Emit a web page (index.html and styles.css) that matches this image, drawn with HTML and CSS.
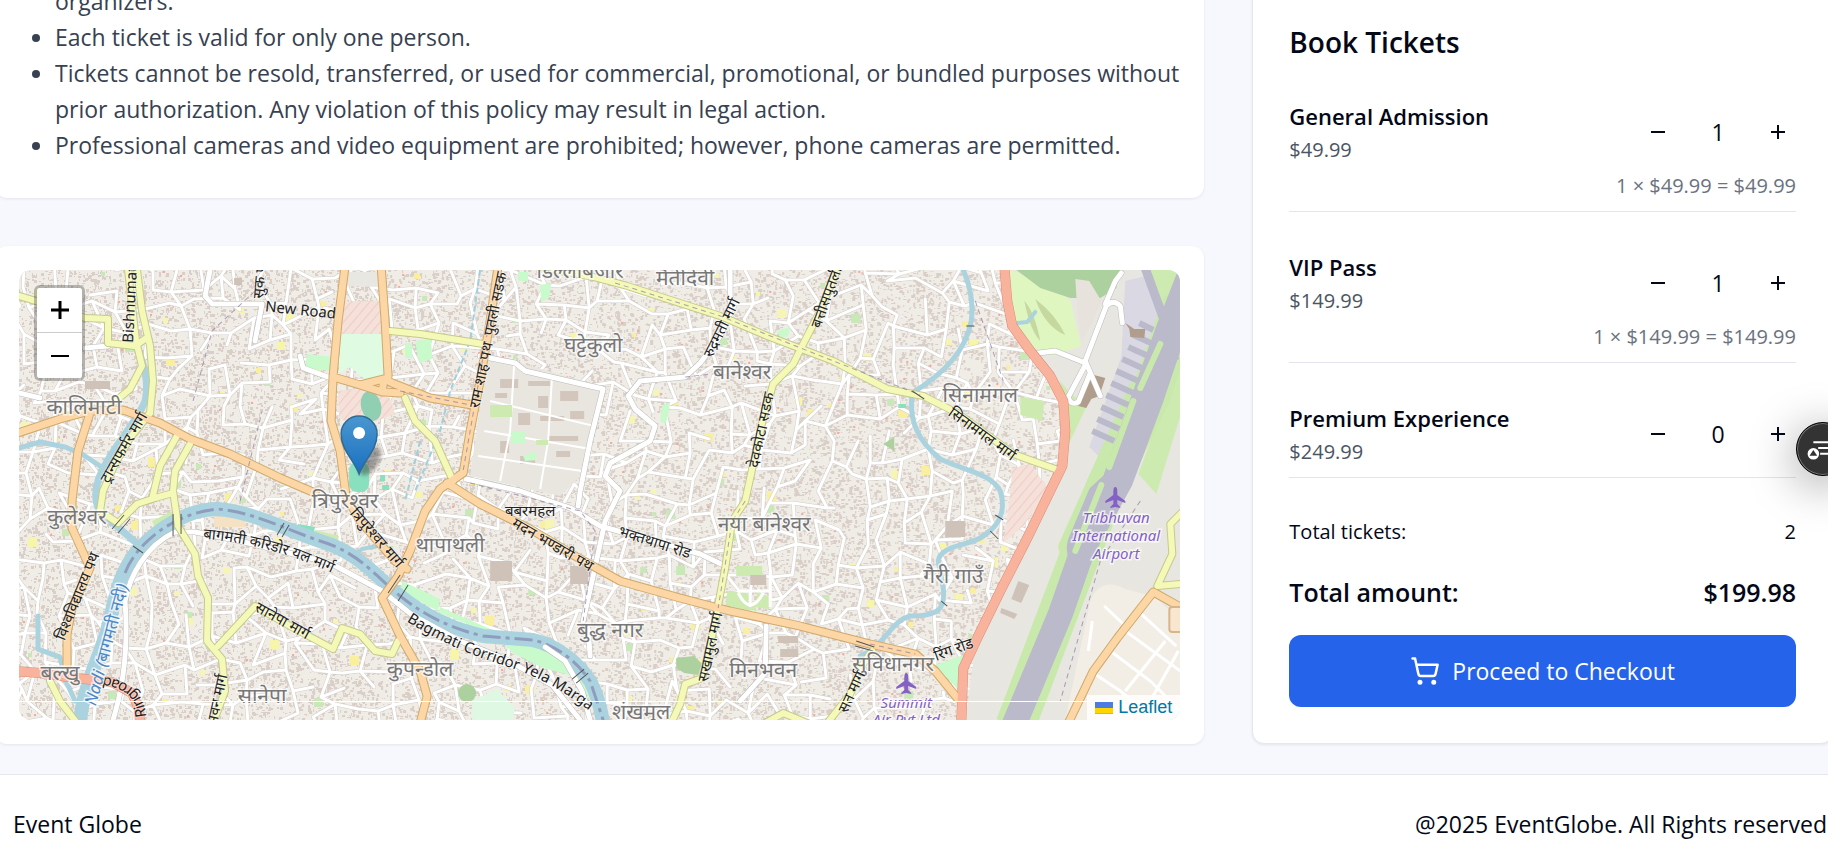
FILE: index.html
```html
<!DOCTYPE html>
<html lang="en">
<head>
<meta charset="utf-8">
<meta name="viewport" content="width=device-width, initial-scale=1">
<title>Event Globe</title>
<link rel="stylesheet" href="styles.css">
</head>
<body>
<main class="layout">
  <div class="main-col">
    <section class="card terms">
      <ul class="terms-list">
        <li>Please follow the instructions of the event staff and the<br>organizers.</li>
        <li>Each ticket is valid for only one person.</li>
        <li>Tickets cannot be resold, transferred, or used for commercial, promotional, or bundled purposes without prior authorization. Any violation of this policy may result in legal action.</li>
        <li>Professional cameras and video equipment are prohibited; however, phone cameras are permitted.</li>
      </ul>
    </section>

    <section class="card" aria-label="Event location">
      <div class="map">
        <svg class="map-canvas" viewBox="19 269 1161 450" preserveAspectRatio="xMidYMid slice" role="img" aria-label="Map of Kathmandu">
          <defs>
            <pattern id="hatch" width="7" height="7" patternUnits="userSpaceOnUse" patternTransform="rotate(40)"><rect width="7" height="7" fill="#f3e1da"/><path d="M0 0V7" stroke="#f5c9c2" stroke-width="2"/></pattern>
            <linearGradient id="pin" x1="0" y1="0" x2="0" y2="1"><stop offset="0" stop-color="#4a97cf"/><stop offset="1" stop-color="#1a6fc0"/></linearGradient>
            <filter id="soft"><feGaussianBlur stdDeviation="2"/></filter>
            <path id="p-corridor" d="M205 538C245 541 285 551 330 571"/>
            <path id="p-bagmati" d="M400 616C440 642 472 654 502 664C532 673 562 687 602 720"/>
            <path id="p-ring" d="M146 719C146 700 138 680 100 675"/>
          </defs>
          <rect x="19" y="269" width="1161" height="450" fill="#f0ece6"/>
          <path id="buildings" class="buildings"/>
          <g id="patches"></g>
          <path id="lane-edge" class="lane-edge"/>
          <path id="lane" class="lane"/>

          <g class="areas">
            <path fill="#e9e6e0" d="M487 355L520 362L600 385L585 470L560 495L470 475Z"/>
            <path fill="#d3c6bc" d="M500 378h18v9h-18zM528 380h22v5h-22zM560 390h18v10h-18zM518 412h12v12h-12zM540 415h24v5h-24zM500 440h9v12h-9zM548 435h30v5h-30zM520 455h15v8h-15zM570 410h14v8h-14zM495 392h12v5h-12zM538 395h10v12h-10zM556 450h14v6h-14z"/>
            <path fill="none" stroke="#fff" stroke-width="2" d="M514 364L510 430L500 480M552 374L548 440L540 488M490 400L594 425M484 430L590 448M478 455L582 470"/>
            <path fill="#cdebb0" d="M490 404h22v12h-22zM536 439h12v5h-12z"/>
            <path fill="#c8facc" d="M511 431h14v12h-14zM523 455l12-5 2 9-12 1zM540 284l11-2-2 15-8 4zM415 340l16-2 1 20-13 4zM405 342h7v15h-7zM518 271h10v9h-10zM777 330l13-4-2 9-8 2zM662 404l8-2-4 20-6-1z"/>
            <path fill="#e9e7e2" d="M347 271h34v15l-34-1z"/>
            <path fill="url(#hatch)" d="M343 300h40v33h-42zM338 390l22-3 30 10 5 16-36 14-20-10z"/>
            <path fill="#dffce2" d="M340 333h43v50l-16-3-17-14-11 6z"/>
            <path fill="#c8facc" d="M307 353l25 3-1 14-26-3z"/>
            <ellipse fill="#90cfb2" cx="371" cy="405" rx="10" ry="15" transform="rotate(-14 371 405)"/>
            <rect fill="#88e0be" x="349" y="461" width="20" height="30" rx="8"/>
            <path fill="#c8facc" d="M402 580l38 18-2 12-38-20zM440 606l50 22-4 3-48-20zM497 637l34 2 30 10 20 16-8 10-30-8-30-15zM577 675l10-5 12 30-5 8z"/>
            <path fill="#88e0be" d="M298 523l17 3-2 8-17-3z"/>
            <path fill="#cdebb0" d="M315 529l24 6-3 7-24-7zM152 520l26-13-3 10-20 10zM215 504q15-3 25 3v5l-25-4z"/>
            <path fill="#f5e2c4" d="M214 515l30 2 2 9-32 0z"/>
            <ellipse fill="#add19e" cx="467" cy="692" rx="9" ry="9"/>
            <path fill="#dff8e4" d="M472 700l25-12 18 20-3 11h-40z"/>
            <path fill="#add19e" d="M676 657l18-2 8 8-4 11-14-2-8-5z"/>
            <path fill="#cdebb0" d="M736 565h26v10h-26zM727 590l20 2 10 18-32-3zM757 590l12 6v12l-14-2z"/>
            <path fill="#cfc2b8" d="M750 574h16v10h-16zM778 635h20v7h-20zM780 648h18v8h-18z"/>
            <path fill="none" stroke="#fff" stroke-width="3" d="M737 590h32M750 590v16M738 592q12 24 25 0M770 570v36"/>
            <path fill="#cfc3b9" d="M85 380h25v8h-25zM490 560h22v20h-22zM570 565h18v18h-18zM945 520h20v16h-20zM234 277h8v7h-8z"/>
            <path fill="#c8facc" d="M935 664l28-10-6 34z"/>
            <path fill="#add19e" d="M883 443l11-7v14z"/>
            <path fill="#88e0be" d="M898 403h8v4h-8zM380 474h5v6h-5zM382 484h7v5h-7z"/>
            <path fill="url(#hatch)" d="M1012 467l18-4 19 26-26 36-20 17 6-40z"/>
            <path fill="#e8e6e0" d="M1010 269L1180 269V719H965L975 645L1062 470L1066 405L1035 350L1014 318Z"/>
            <path fill="#f2eee6" d="M1090 600q10-25 35-12l30 8 25 24v99h-115z"/>
            <path fill="none" stroke="#fff" stroke-width="3" d="M1093 672L1120 690L1150 715M1110 650L1150 680L1180 710M1125 630L1180 670M1140 612L1176 645M1104 605L1125 625M1100 700L1120 719M1125 690L1165 640M1150 700L1178 650M1092 620L1088 650M1075 700L1090 685"/>
            <path fill="#dff6c0" d="M1010 269l33 12 27 18 11 46-30 10-18-8-21-30z"/>
            <path fill="#add19e" d="M1016 269h104l-4 18-16 10-30 0-30-10z"/>
            <path fill="#e8e2dc" d="M1075 278l14 2 12 20-8 20-12 20-4-30z"/>
            <path fill="#c4d8a0" d="M1024 300q10 10 16 40q-10-10-16-40zM1035 298q20 15 30 36q-20-8-30-36z"/>
            <path fill="#cdebb0" d="M1020 396l24 4-2 20-22-6zM1060 380l8 10 18 16-18 38zM1150 269h30v80l-40 30z"/>
            <path fill="#d9d8e3" d="M1125 280l25-6 15 60-54 134-22-22 32-90z"/>
            <path fill="#cdebb0" d="M1180 360v55l-24 78-18-20z"/>
          </g>

          <g class="runways">
            <path class="apron-edge" d="M1183 300L1150 395L1106 485L1015 725"/>
            <path class="apron-edge narrow" d="M1140 383L1094 488L1068 546L1080 562"/>
            <path class="runway" d="M1187 290L1150 400L1120 480L1083 547L1060 613L1012 728"/>
            <path class="taxi" d="M1143 262L1163 317M1183 268L1160 327L1140 383L1107 477L1093 490L1072 540Q1068 556 1080 562M1160 327L1175 360"/>
            <path class="stand" d="M1139 322l14 7M1133 334l22 10M1128 346l22 10M1122 358l22 10M1116 370l22 10M1111 382l22 10M1106 394l22 10M1101 406l22 10M1097 418l22 10M1092 430l22 10"/>
            <path class="verge" d="M1160 343l-20 44M1133 400l-24 66M1101 484l-26 66"/>
          </g>
          <path fill="#b19d8b" d="M1090 373l15 4-6 18-8 3-5 9-8-2zM1125 322l9 6h11l-1 9-14-1-1-8z"/>
          <path fill="#cfc3b9" d="M1018 580l11 4-8 18-10-4zM1001 607l16 6-3 5-14-6z"/>

          <g class="river">
            <path stroke-width="14" d="M80 722C82 690 98 660 107 630C115 600 117 575 137 550C160 525 190 508 217 508C250 510 285 528 320 540C360 552 375 575 400 595C425 615 450 627 483 635L533 639C560 645 580 665 590 680C598 695 601 710 603 722"/>
            <path stroke-width="7" d="M137 345C142 360 150 380 145 400C138 420 105 455 98 480C92 500 98 515 113 522L140 545"/>
            <path stroke-width="5" d="M19 447L40 441L65 446L82 453L100 465M38 615V648L60 656L66 680L75 700"/>
            <path stroke-width="5" d="M963 269C972 290 973 305 971 320C965 350 945 372 912 392C908 420 918 440 940 458C965 470 990 472 1000 490C1006 510 1000 525 980 537C965 545 940 545 938 560L943 587C945 607 940 615 910 615C890 620 885 645 860 655"/>
            <path stroke-width="4" d="M1017 322l10-1 8-10M350 558l12-10 15-3"/>
          </g>
          <path class="border-line" d="M125 572C135 545 170 513 217 508C250 510 285 528 320 540C360 552 375 575 400 595C425 615 450 627 483 635L533 639C560 645 580 665 590 680L603 719"/>
          <g class="drain"><path d="M480 269L470 340L450 390L440 430L415 490M420 440l-15 60"/></g>

          <g class="minor-edge"><use href="#minor"/></g>
          <g class="minor"><g id="minor">
            <path d="M113 719C125 680 128 640 125 600C130 575 145 545 175 531L195 531L240 540L330 562L382 590L412 614L460 640L505 658L552 684L580 719M545 646L565 660L582 690L590 719"/>
            <path d="M210 269L205 295L212 303L262 303L255 340M19 392L40 397M85 347L108 345M300 355L303 367L333 378"/>
            <path d="M480 355L515 362L525 370L603 388L590 440L580 490L578 505M730 269V312L720 335L700 362L685 376L640 380L628 395L635 408L655 425L650 440L610 462L605 475L620 490L605 520L593 575L583 620"/>
            <path d="M466 478L520 490L570 507L600 525L700 553L725 565M588 628L590 655M766 625L765 672L740 700"/>
            <path d="M1100 395L1085 360L1106 305Q1113 298 1120 305L1122 322M1085 362L1055 350L1038 352M1085 364L1068 396Q1070 405 1078 401L1090 372M1105 303L1115 280L1121 272"/>
          </g></g>

          <g class="road secondary-edge"><use href="#secondary"/></g>
          <g class="road primary-edge"><use href="#primary"/></g>
          <g class="road trunk-edge"><use href="#trunk"/></g>
          <g class="road secondary"><g id="secondary">
            <path d="M128 269L132 305L136 340L142 365L130 388L112 403M137 269L142 310L150 345L153 380L150 412M19 295L45 303L85 317L108 318V342L135 345L145 338"/>
            <path d="M150 412L130 437L115 463L103 490L100 510L118 522L137 503L155 497L173 492M178 433L160 465L152 498M190 443L175 470L173 490L178 525L195 553L198 575L208 597L207 640L222 658L225 690L213 722"/>
            <path d="M218 645L255 605L290 625L333 648L342 627L360 633L375 650L392 653L398 640M50 680L60 700L77 722"/>
            <path d="M390 330L420 333L483 343M405 397L415 420L435 440L453 480"/>
            <path d="M520 262L593 276L627 285L667 298L720 315L767 335L833 360L887 388L923 395L957 412L1013 453L1055 468"/>
            <path d="M838 266L820 310L802 345L793 363L773 383L763 417L745 500L732 520L725 567L713 630L702 677L685 683L680 703L671 722"/>
            <path d="M872 650L860 667L850 693L827 722M765 722L783 712L807 722M1183 510L1170 523L1172 553L1157 585L1180 583"/>
          </g></g>
          <g class="road primary"><g id="primary">
            <path d="M15 433L60 418L90 410L123 409L160 422L190 438L230 453L280 477L315 492M90 412L78 450L72 500L72 527L90 567L72 607L67 633V664"/>
            <path d="M345 265L338 320L333 375L331 420L340 450L346 495L360 520L395 560L407 568M381 265L385 320L388 375M333 376L360 384L384 378L392 382L430 397L472 404M384 378L382 391L360 384M384 391L400 392"/>
            <path d="M498 265L490 320L480 380L470 430L463 472L440 488L425 510L410 550L398 575L382 597L400 635L420 670L427 695L420 722"/>
            <path d="M447 482L480 503L530 528L580 558L620 580L680 597L730 610L800 625L870 643L915 653L935 670L957 697M1180 606L1153 591L1117 637L1093 670L1068 722"/>
          </g></g>
          <g class="road trunk"><g id="trunk">
            <path d="M1004 265L1007 300L1012 325L1030 350L1050 375L1063 400L1065 430L1062 465L1027 537L1000 590L977 637L963 667L961 722M15 670L40 672L75 677L112 681L132 692L139 708L140 722"/>
          </g></g>
          <g class="dashes"><path d="M615 282L720 315L833 360L920 394M745 500L732 520L718 607M498 269L470 430L463 470M470 482L580 510L595 530L583 620M870 643L915 653M193 400L212 330L255 290M240 500L262 410M400 390L470 404M1140 500L1100 560L1060 700M975 300L1003 380M685 376L720 372"/></g>
          <g class="bridges"><path d="M173 513v22M181 513v20M112 528l12-14M118 532l12-14M133 545l10 7M277 534l7-12M282 536l7-12M388 592l12-18M398 600l10-16M572 678l12-10M576 682l12-10M912 390l12 8M990 530l8 8M995 514l8 5M966 325h8M941 600l6 5M856 640l18 6M855 645l18 5"/></g>

          <g class="place">
            <text x="84" y="413">कालिमाटी</text><text x="77" y="523">कुलेश्वर</text><text x="60" y="679">बल्खु</text>
            <text x="262" y="702">सानेपा</text><text x="420" y="675">कुपन्डोल</text><text x="345" y="507">त्रिपुरेश्वर</text>
            <text x="450" y="551">थापाथली</text><text x="593" y="351">घट्टेकुलो</text><text x="742" y="378">बानेश्वर</text>
            <text x="685" y="284">मैतीदेवी</text><text x="580" y="277">डिल्लीबजार</text><text x="980" y="401">सिनामंगल</text>
            <text x="764" y="530">नया बानेश्वर</text><text x="610" y="636">बुद्ध नगर</text><text x="763" y="676">मिनभवन</text>
            <text x="641" y="718">शंखमुल</text><text x="893" y="670">सुविधानगर</text><text x="953" y="582">गैरी गाउँ</text>
          </g>
          <g class="street">
            <text x="530" y="515">बबरमहल</text>
            <text transform="translate(300 314) rotate(6)">New Road</text>
            <text transform="translate(135 302) rotate(-87)">Bishnumati</text>
            <text transform="translate(265 276) rotate(-85)">सुक पथ</text>
            <text transform="translate(500 304) rotate(-78)">पुतली सडक</text>
            <text transform="translate(486 375) rotate(-78)">राम शाह पथ</text>
            <text transform="translate(726 329) rotate(-64)">रुद्रमती मार्ग</text>
            <text transform="translate(766 430) rotate(-78)">देवकोटा सडक</text>
            <text transform="translate(831 298) rotate(-70)">बत्तीसपुतली</text>
            <text transform="translate(979 437) rotate(36)">सिनामंगल मार्ग</text>
            <text transform="translate(128 449) rotate(-60)">ट्रान्सफर्मर मार्ग</text>
            <text transform="translate(373 540) rotate(49)">त्रिपुरेश्वर मार्ग</text>
            <text transform="translate(82 597) rotate(-68)">विश्वविद्यालय पथ</text>
            <text transform="translate(280 624) rotate(29)">सानेपा मार्ग</text>
            <text transform="translate(222 700) rotate(-78)">भवन मार्ग</text>
            <text transform="translate(550 548) rotate(30)">मदन भण्डारी पथ</text>
            <text transform="translate(653 546) rotate(18)">भक्तथापा रोड</text>
            <text transform="translate(715 647) rotate(-78)">सखामुल मार्ग</text>
            <text transform="translate(955 653) rotate(-20)">रिंग रोड</text>
            <text transform="translate(856 693) rotate(-65)">सत मार्ग</text>
            <text><textPath href="#p-corridor" startOffset="50%">बागमती करिडोर यल मार्ग</textPath></text>
            <text><textPath href="#p-bagmati" startOffset="48%">Bagmati Corridor Yela Marga</textPath></text>
            <text><textPath href="#p-ring" startOffset="50%">Ringroad</textPath></text>
          </g>
          <text class="water-name" transform="translate(112 645) rotate(-75)">Nadi (बागमती नदी)</text>
          <g class="airport">
            <text x="1116" y="522">Tribhuvan</text><text x="1116" y="540">International</text><text x="1116" y="558">Airport</text>
            <text x="906" y="707">Summit</text><text x="906" y="724">Air Pvt Ltd</text>
            <path id="plane" d="M1115 486q2 0 2 5v3l8 6v2l-8-3v4l3 3v1l-5-1-5 1v-1l3-3v-4l-8 3v-2l8-6v-3q0-5 2-5z"/>
            <use href="#plane" x="-209" y="186"/>
          </g>
          <path class="shield" d="M1183 606h-11q-3 0-3 3v19q0 3 3 3h11z"/>
          <path d="M19 700.500H1180" stroke="#fff"/>

          <ellipse cx="370" cy="460" rx="8" ry="16" transform="rotate(32 370 460)" fill="#333" opacity=".45" filter="url(#soft)"/>
          <path d="M359 473C354 459 341 449 341 433A18 18 0 0 1 377 433C377 449 364 459 359 473Z" fill="url(#pin)" stroke="#2e6c97" stroke-width="1.500"/>
          <circle cx="359" cy="432" r="6" fill="#fff"/>
        </svg>

        <div class="zoom">
          <button type="button" aria-label="Zoom in"><svg viewBox="0 0 20 20"><path d="M1 10H19M10 1V19"/></svg></button>
          <button type="button" aria-label="Zoom out"><svg viewBox="0 0 20 20"><path d="M1 10H19"/></svg></button>
        </div>
        <a class="attribution" href="#leaflet"><svg viewBox="0 0 18 12"><path fill="#4c7be1" d="M0 0h18v6H0z"/><path fill="#ffd500" d="M0 6h18v6H0z"/><path fill="#e0bc00" d="M0 11h18v1H0z"/></svg>Leaflet</a>
      </div>
    </section>
  </div>

  <aside class="card booking">
    <h2>Book Tickets</h2>
    <div class="ticket">
      <div class="ticket-row">
        <div><h3>General Admission</h3><p class="price">$49.99</p></div>
        <div class="stepper">
          <button type="button" aria-label="Remove one"><svg viewBox="0 0 24 24"><path d="M5 12h14"/></svg></button>
          <output>1</output>
          <button type="button" aria-label="Add one"><svg viewBox="0 0 24 24"><path d="M5 12h14M12 5v14"/></svg></button>
        </div>
      </div>
      <p class="subtotal">1 × $49.99 = $49.99</p>
    </div>
    <div class="ticket">
      <div class="ticket-row">
        <div><h3>VIP Pass</h3><p class="price">$149.99</p></div>
        <div class="stepper">
          <button type="button" aria-label="Remove one"><svg viewBox="0 0 24 24"><path d="M5 12h14"/></svg></button>
          <output>1</output>
          <button type="button" aria-label="Add one"><svg viewBox="0 0 24 24"><path d="M5 12h14M12 5v14"/></svg></button>
        </div>
      </div>
      <p class="subtotal">1 × $149.99 = $149.99</p>
    </div>
    <div class="ticket">
      <div class="ticket-row">
        <div><h3>Premium Experience</h3><p class="price">$249.99</p></div>
        <div class="stepper">
          <button type="button" aria-label="Remove one"><svg viewBox="0 0 24 24"><path d="M5 12h14"/></svg></button>
          <output>0</output>
          <button type="button" aria-label="Add one"><svg viewBox="0 0 24 24"><path d="M5 12h14M12 5v14"/></svg></button>
        </div>
      </div>
    </div>
    <div class="totals">
      <div class="line"><span>Total tickets:</span><span>2</span></div>
      <div class="line total"><span>Total amount:</span><span>$199.98</span></div>
    </div>
    <button class="checkout" type="button">
      <svg viewBox="0 0 24 24"><circle cx="8" cy="21" r="1"/><circle cx="19" cy="21" r="1"/><path d="M2.050 2.050h2l2.660 12.420a2 2 0 0 0 2 1.580h9.780a2 2 0 0 0 1.950-1.570l1.650-7.430H5.120"/></svg>
      Proceed to Checkout
    </button>
  </aside>
</main>

<footer class="footer">
  <span>Event Globe</span>
  <span>@2025 EventGlobe. All Rights reserved</span>
</footer>

<button class="widget" type="button" aria-label="Reading assistant">
  <svg viewBox="0 0 54 54"><path d="M17 20H40M22 26H40M24 32H40" stroke="#fff" stroke-width="2" fill="none"/><circle cx="17" cy="32" r="6" fill="#fff"/><path d="M17 28l4 6h-8z" fill="#333"/></svg>
</button>
<script src="map.js"></script>
</body>
</html>
```
FILE: styles.css
```css
* { box-sizing: border-box; }

body {
  margin: 0;
  overflow: hidden;
  background: #f6f8fd;
  color: #020817;
  font-family: "Segoe UI", "Open Sans", "Noto Sans", sans-serif;
  font-size: 23px;
  line-height: 36px;
}

h2, h3, p, ul { margin: 0; padding: 0; }
h2, h3 { font-weight: 600; }
button { margin: 0; padding: 0; border: 0; background: none; color: inherit; font: inherit; cursor: pointer; }

.layout {
  display: grid;
  grid-template-columns: repeat(3, 1fr);
  gap: 48px;
  align-items: end;
  margin: -53px -5px 0;
}
.main-col { grid-column: span 2; display: flex; flex-direction: column; gap: 48px; }

.card {
  padding: 24px;
  border-radius: 12px;
  background: #fff;
  box-shadow: 0 1px 3px rgba(0, 0, 0, .08);
}
.terms { padding: 0 16px 35px 36px; }
.terms-list { padding-left: 24px; color: #374151; }

.map {
  position: relative;
  height: 450px;
  overflow: hidden;
  border-radius: 12px;
}
.map-canvas { display: block; width: 100%; height: 100%; }

.buildings { fill: #d9cfc8; }
.lane, .lane-edge { fill: none; stroke-linejoin: round; stroke-linecap: round; }
.lane-edge { stroke: #d3cfcb; stroke-width: 4; }
.lane { stroke: #fff; stroke-width: 3; }
.river { fill: none; stroke: #aad3df; stroke-linecap: round; stroke-linejoin: round; }
.border-line { fill: none; stroke: #8a8fb4; stroke-width: 3; stroke-dasharray: 18 5 4 5; opacity: .8; }
.drain { fill: none; stroke: #9fd0e0; stroke-width: 2; stroke-dasharray: 6 3; }
.minor, .minor-edge, .road { fill: none; stroke-linejoin: round; stroke-linecap: round; }
.minor { stroke: #fff; stroke-width: 5; }
.minor-edge { stroke: #bbb; stroke-width: 6; }
.secondary { stroke: #f5f9b8; stroke-width: 6; }
.secondary-edge { stroke: #c6c98c; stroke-width: 8; }
.primary { stroke: #fcd6a4; stroke-width: 7; }
.primary-edge { stroke: #cfa96c; stroke-width: 9; }
.trunk { stroke: #f9b29c; stroke-width: 9; }
.trunk-edge { stroke: #d88f78; stroke-width: 10; }
.dashes { fill: none; stroke: #8d77a0; stroke-width: 1; stroke-dasharray: 5 4; opacity: .7; }
.bridges { fill: none; stroke: #555; stroke-width: 1; }
.shield { fill: #f8e6cf; stroke: #d8b48a; stroke-width: 2; }

.runways { fill: none; stroke-linejoin: round; }
.apron-edge { stroke: #c9e9ac; stroke-width: 40; }
.apron-edge.narrow { stroke-width: 20; }
.runway { stroke: #bbbacb; stroke-width: 25; }
.taxi { stroke: #bbbacb; stroke-width: 9; }
.stand { stroke: #bbbacb; stroke-width: 6; }
.verge { stroke: #c9e9ac; stroke-width: 6; stroke-linecap: round; }

.map-canvas text {
  font-family: "Noto Sans", "Noto Sans Devanagari", sans-serif;
  text-anchor: middle;
  paint-order: stroke;
  stroke: rgba(255, 255, 255, .7);
  stroke-width: 3px;
}
.place { fill: #777; font-size: 21px; }
.street { fill: #222; font-size: 15px; }
.map-canvas .street text { stroke: rgba(255, 255, 255, .4); stroke-width: 2px; }
.water-name { fill: #4d86c4; font-size: 17px; font-style: italic; }
.airport { fill: #8461c4; font-size: 15px; font-style: italic; }

.zoom {
  position: absolute;
  top: 15px;
  left: 15px;
  border: 3px solid rgba(0, 0, 0, .25);
  border-radius: 6px;
  background-clip: padding-box;
}
.zoom button {
  display: grid;
  place-items: center;
  width: 45px;
  height: 45px;
  background: #fff;
}
.zoom button:first-child { border-bottom: 1px solid #ccc; border-radius: 3px 3px 0 0; }
.zoom button:last-child { border-radius: 0 0 3px 3px; }
.zoom svg { width: 20px; height: 20px; fill: none; stroke: #000; stroke-width: 3; }
.zoom button:last-child svg { stroke-width: 2; }

.attribution {
  position: absolute;
  right: 0;
  bottom: 0;
  display: flex;
  align-items: center;
  gap: 5px;
  padding: 0 8px;
  background: rgba(255, 255, 255, .8);
  color: #0078a8;
  font: 18px/25px "Liberation Sans", Arial, sans-serif;
  text-decoration: none;
}
.attribution svg { width: 18px; height: 12px; }

.booking { padding: 36px; border: 1px solid #e2e8f0; }
.booking h2 { margin-bottom: 38px; font-size: 28px; }
.booking h3 { font-size: 22px; line-height: 37px; }

.ticket { margin-bottom: 37px; padding-bottom: 10px; border-bottom: 1px solid #e2e5eb; }
.ticket-row { display: flex; align-items: center; justify-content: space-between; }
.price, .subtotal, .line { font-size: 20px; line-height: 30px; }
.price { color: #4b5563; }
.subtotal { margin-top: 6px; color: #6b7280; text-align: right; }
.stepper { display: flex; align-items: center; }
.stepper button { display: grid; place-items: center; width: 36px; height: 48px; }
.stepper svg { width: 24px; height: 24px; fill: none; stroke: currentColor; stroke-width: 2; }
.stepper output { width: 84px; text-align: center; }

.totals { display: flex; flex-direction: column; gap: 26px; padding: 2px 0 24px; }
.line { display: flex; justify-content: space-between; }
.line.total { font-size: 25px; line-height: 38px; font-weight: 600; }

.checkout {
  display: flex;
  align-items: center;
  justify-content: center;
  gap: 12px;
  width: 100%;
  height: 72px;
  border-radius: 12px;
  background: #2563eb;
  color: #fff;
}
.checkout svg { width: 30px; height: 30px; fill: none; stroke: currentColor; stroke-width: 2; stroke-linecap: round; stroke-linejoin: round; }

.footer {
  display: flex;
  justify-content: space-between;
  margin-top: 30px;
  padding: 31px 1px 12px 13px;
  border-top: 1px solid #e5e7eb;
  background: #fff;
}

.widget {
  position: fixed;
  top: 422px;
  right: -22px;
  width: 54px;
  height: 54px;
  border: 1px solid #000;
  border-radius: 50%;
  background: #333;
  box-shadow: inset 0 0 0 1px #777, 0 8px 48px rgba(0, 0, 0, .4);
}
.widget svg { display: block; width: 100%; height: 100%; }
```
FILE: map.js
```js
// Fills the base map with lanes, building footprints and small land-use patches.
let seed = 7;
const rnd = () => (seed = (seed * 16807) % 2147483647) / 2147483647;
const pick = (list) => list[Math.floor(rnd() * list.length)];
const setPath = (id, d) => document.getElementById(id).setAttribute('d', d);

const STEP = 21;
const COLS = 58;
const ROWS = 24;
const nodes = [];
for (let r = 0; r < ROWS; r++) {
  nodes.push([]);
  for (let c = 0; c < COLS; c++) {
    const x = 8 + c * STEP + (rnd() - 0.5) * 18 + Math.sin(r / 3) * 10;
    const y = 255 + r * STEP + (rnd() - 0.5) * 17 + Math.sin(c / 4) * 12;
    nodes[r].push([Math.round(x), Math.round(y)]);
  }
}
let lanes = '';
for (let r = 0; r < ROWS; r++) {
  for (let c = 0; c < COLS; c++) {
    const from = nodes[r][c];
    if (c + 1 < COLS && rnd() < 0.68) lanes += `M${from}L${nodes[r][c + 1]}`;
    if (r + 1 < ROWS && rnd() < 0.68) lanes += `M${from}L${nodes[r + 1][c]}`;
  }
}
setPath('lane', lanes);
setPath('lane-edge', lanes);

let houses = '';
for (let i = 0; i < 42000; i++) {
  const x = Math.floor(19 + rnd() * 1160);
  const y = Math.floor(269 + rnd() * 449);
  const w = 1 + Math.floor(rnd() * 3);
  const h = 1 + Math.floor(rnd() * 3);
  houses += `M${x} ${y}h${w}v${h}h-${w}z`;
}
setPath('buildings', houses);

const COLORS = ['#f7f5a8', '#f7f5b4', '#f9ef9c', '#c8e8b8', '#f5a79c', '#f5a79c', '#f5a79c', '#f5a79c'];
let patches = '';
for (let i = 0; i < 420; i++) {
  const color = pick(COLORS);
  const size = color === '#f5a79c' ? 2 : 4 + Math.floor(rnd() * 6);
  const x = Math.round(19 + rnd() * 1155);
  const y = Math.round(269 + rnd() * 445);
  patches += `<rect x="${x}" y="${y}" width="${size}" height="${size}" fill="${color}"/>`;
}
document.getElementById('patches').innerHTML = patches;
```
